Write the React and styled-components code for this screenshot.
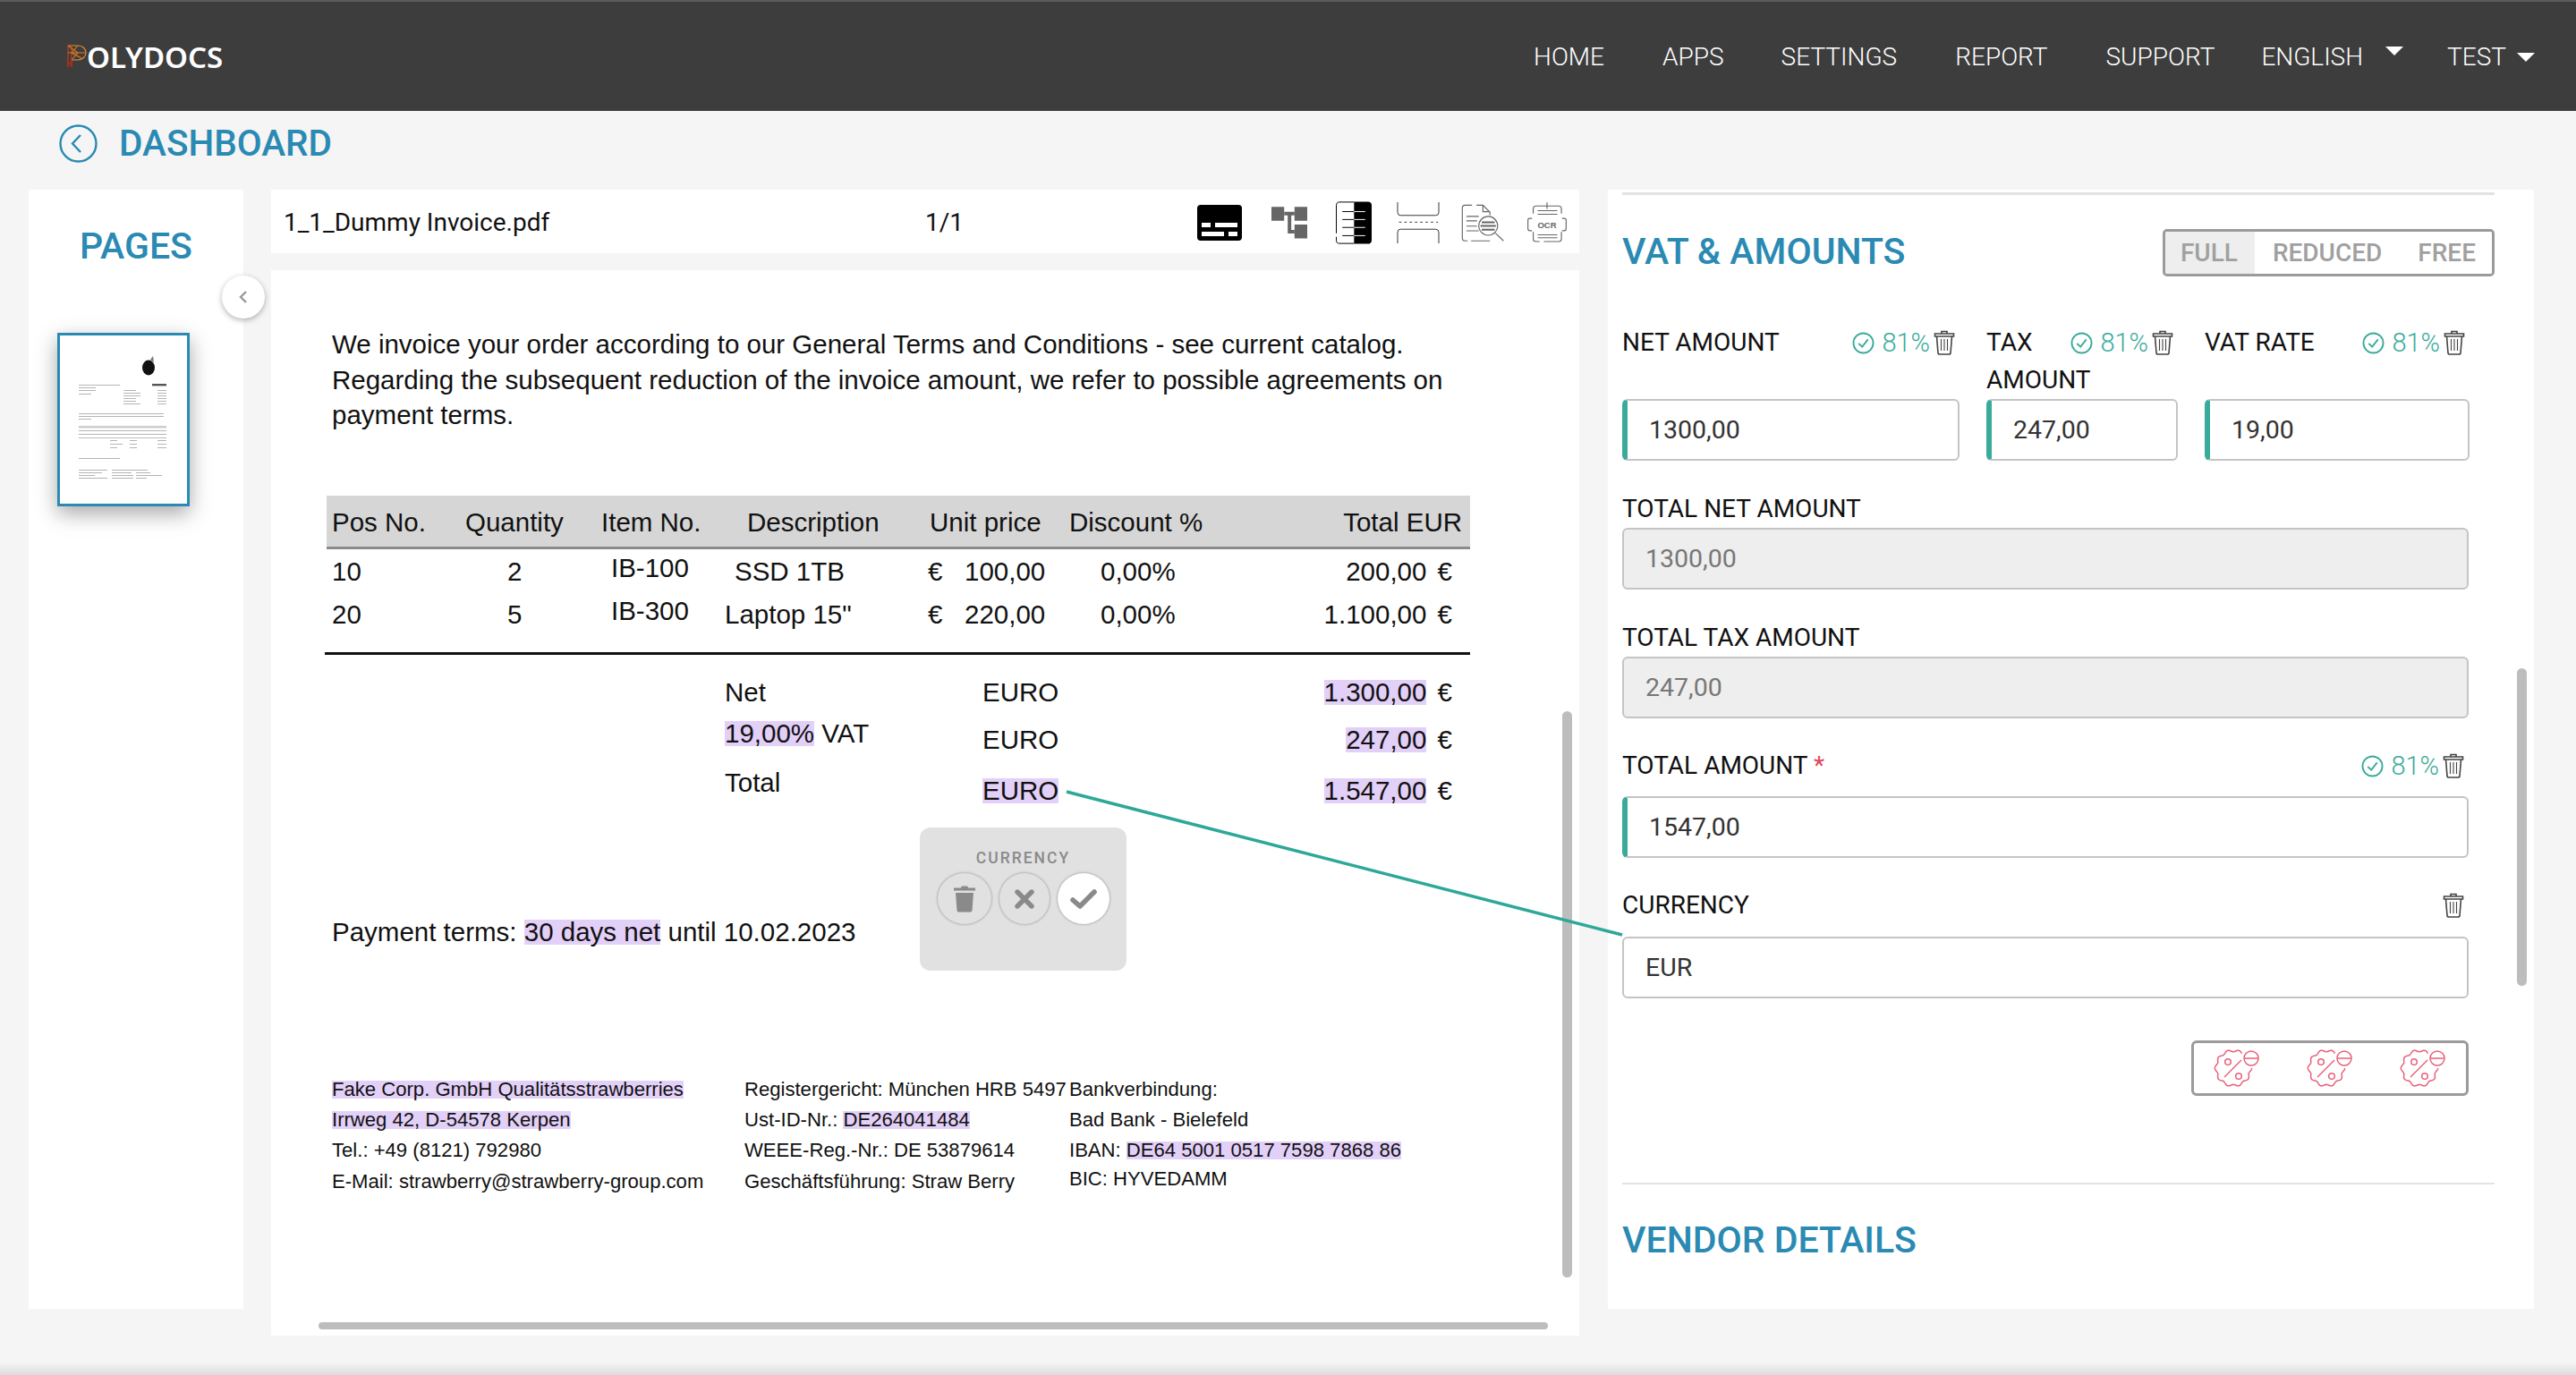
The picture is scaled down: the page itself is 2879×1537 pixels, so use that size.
import React from 'react';
import styled, { createGlobalStyle } from 'styled-components';

const BLUE = '#2a8ab3';
const TEAL = '#3aab9b';
const TABLE_COLUMNS = '149px 152px 138px 227px 158px 200px 1fr';

const GlobalStyle = createGlobalStyle`
  html, body { margin: 0; padding: 0; background: #f5f5f5; }
  body { font-family: Roboto, "Liberation Sans", sans-serif; }
  * { box-sizing: border-box; }
`;

const Page = styled.div`
  position: relative;
  width: 2879px;
  height: 1537px;
  overflow: hidden;
  display: flex;
  flex-direction: column;
  background: #f5f5f5;
`;

const Header = styled.header`
  height: 124px;
  flex: none;
  display: flex;
  align-items: center;
  justify-content: space-between;
  padding: 0 46px 0 74px;
  background: #3d3d3d;
  border-top: 2px solid #5b5b61;
  color: #fff;
`;

const Logo = styled.div`
  display: flex;
  align-items: center;
  font-family: "Noto Sans", sans-serif;
  font-size: 33px;
  font-weight: 600;
`;

const Nav = styled.nav`
  display: flex;
  align-items: center;
  font-size: 28px;
  font-weight: 300;
`;

const NavLink = styled.span`
  margin-left: ${({ $gap }) => $gap}px;
`;

const Caret = styled.span`
  width: 0;
  height: 0;
  margin-left: ${({ $gap }) => $gap}px;
  margin-top: ${({ $top }) => $top}px;
  border-left: 10px solid transparent;
  border-right: 10px solid transparent;
  border-top: 10px solid #fff;
`;

const TitleBar = styled.div`
  height: 88px;
  flex: none;
  display: flex;
  align-items: flex-start;
  padding: 15px 0 0 66px;
  gap: 24px;
`;

const Title = styled.h1`
  margin: 0;
  font-size: 40.5px;
  line-height: 43px;
  font-weight: 500;
  color: ${BLUE};
`;

const Content = styled.div`
  display: flex;
  align-items: flex-start;
  padding-left: 32px;
`;

const PagesPanel = styled.aside`
  position: relative;
  width: 240px;
  height: 1251px;
  flex: none;
  background: #fff;
  padding-top: 40px;
`;

const SectionTitle = styled.h2`
  margin: 0;
  font-size: 41px;
  line-height: 46px;
  font-weight: 500;
  color: ${BLUE};
`;

const PagesTitle = styled(SectionTitle)`
  padding-left: 57px;
`;

const VatTitle = styled(SectionTitle)`
  margin-top: -3px;
`;

const CollapseButton = styled.div`
  position: absolute;
  top: 96px;
  right: -24px;
  width: 48px;
  height: 48px;
  display: flex;
  align-items: center;
  justify-content: center;
  border-radius: 50%;
  background: #fff;
  box-shadow: 0 2px 6px rgba(0, 0, 0, 0.3);
  z-index: 2;
`;

const Thumb = styled.div`
  width: 148px;
  height: 194px;
  margin: 74px 0 0 32px;
  background: #fff;
  border: 3px solid ${BLUE};
  box-shadow: 0 8px 22px rgba(0, 0, 0, 0.35);
`;

const ViewerColumn = styled.main`
  width: 1462px;
  flex: none;
  margin-left: 31px;
  display: flex;
  flex-direction: column;
  gap: 19px;
`;

const Toolbar = styled.div`
  height: 71px;
  display: grid;
  grid-template-columns: 717px 1fr auto;
  align-items: center;
  padding: 2px 14px 0;
  background: #fff;
  font-size: 28px;
  color: #111;
`;

const ToolIcons = styled.div`
  display: flex;
  align-items: center;
`;

const ToolIcon = styled.svg`
  display: block;
  flex: none;
  margin-left: ${({ $gap }) => $gap}px;
`;

const DocPanel = styled.section`
  position: relative;
  height: 1191px;
  padding-top: 63px;
  background: #fff;
  font-family: "Liberation Sans", Arial, sans-serif;
  font-size: 29.5px;
  color: #111;
`;

const Paragraph = styled.p`
  margin: 0 0 0 68px;
  line-height: 39.5px;
  white-space: nowrap;
`;

const Mark = styled.span`
  display: inline-block;
  line-height: 28px;
  background: #e3d0f8;
`;

const TableHead = styled.div`
  display: grid;
  grid-template-columns: ${TABLE_COLUMNS};
  align-items: center;
  width: 1278px;
  height: 60px;
  margin: 70px 0 0 62px;
  padding: 3px 9px 0 6px;
  background: #d6d6d6;
  border-bottom: 3px solid #8b8b8b;
`;

const TableRows = styled.div`
  padding-top: 5px;
`;

const TableRow = styled.div`
  display: grid;
  grid-template-columns: ${TABLE_COLUMNS};
  width: 1278px;
  height: 48px;
  margin-left: 62px;
  padding: 0 20px 0 6px;
  line-height: 40px;
`;

const Cell = styled.div`
  white-space: nowrap;
  padding-left: ${({ $indent }) => $indent || 0}px;
  margin-top: ${({ $shift }) => $shift || 0}px;
`;

const HeadTotal = styled(Cell)`
  text-align: right;
`;

const AmountCell = styled(Cell)`
  text-align: right;
  word-spacing: 4px;
`;

const Rule = styled.div`
  width: 1280px;
  height: 3px;
  margin: 14px 0 0 60px;
  background: #111;
`;

const Totals = styled.div`
  width: 1252px;
  margin: 22px 0 0 68px;
  padding-left: 439px;
  line-height: 40px;
`;

const TotalRow = styled.div`
  display: grid;
  grid-template-columns: 288px 1fr;
  height: ${({ $height }) => $height}px;
`;

const TotalLabel = styled.div`
  grid-column: 1 / -1;
  height: 0;
  margin-top: ${({ $shift }) => $shift || 0}px;
  margin-bottom: ${({ $shift }) => -($shift || 0)}px;
  white-space: nowrap;
`;

const Terms = styled.p`
  margin: 118px 0 0 68px;
  line-height: 40px;
`;

const DocFooter = styled.div`
  display: grid;
  grid-template-columns: 461px 363px auto;
  margin: 139px 0 0 68px;
  font-size: 22.1px;
  line-height: 34.4px;
  white-space: nowrap;
`;

const FootMark = styled.span`
  display: inline-block;
  line-height: 20px;
  background: #e3d0f8;
`;

const FootRaised = styled.div`
  margin-top: -3px;
`;

const Popup = styled.div`
  position: absolute;
  left: 725px;
  top: 623px;
  width: 231px;
  height: 160px;
  padding-top: 24px;
  border-radius: 12px;
  background: #e1e1e1;
  font-family: Roboto, sans-serif;
`;

const PopupTitle = styled.div`
  text-align: center;
  font-size: 17.5px;
  line-height: 20px;
  font-weight: 500;
  letter-spacing: 2px;
  color: #8a8a8a;
`;

const PopupActions = styled.div`
  display: flex;
  align-items: center;
  gap: 9px;
  margin-top: 7px;
  padding-left: 20px;
`;

const RoundButton = styled.div`
  width: ${({ $size }) => $size}px;
  height: 57px;
  display: flex;
  align-items: center;
  justify-content: center;
  border-radius: 50%;
  background: ${({ $on }) => ($on ? '#fff' : '#e1e1e1')};
  box-shadow: 0 0 3px rgba(0, 0, 0, 0.4);
`;

const ScrollThumb = styled.div`
  position: absolute;
  left: ${({ $left }) => $left}px;
  top: ${({ $top }) => $top}px;
  width: ${({ $w }) => $w}px;
  height: ${({ $h }) => $h}px;
  border-radius: 6px;
  background: #bdbdbd;
`;

const FormPanel = styled.section`
  position: relative;
  width: 1035px;
  height: 1251px;
  flex: none;
  margin-left: 32px;
  padding: 3px 44px 0 16px;
  background: #fff;
  overflow: hidden;
`;

const TopLine = styled.div`
  height: 3px;
  background: #e3e3e3;
`;

const SectionHead = styled.div`
  display: flex;
  align-items: center;
  justify-content: space-between;
  margin-top: 38px;
  height: 53px;
`;

const Toggle = styled.div`
  display: flex;
  height: 53px;
  border: 3px solid #9c9a9a;
  border-radius: 5px;
  overflow: hidden;
`;

const ToggleItem = styled.div`
  display: flex;
  align-items: center;
  padding: 0 ${({ $right }) => $right}px 0 ${({ $left }) => $left}px;
  font-size: 28px;
  font-weight: 500;
  color: #a0a0a0;
  background: ${({ $on }) => ($on ? '#eeeeee' : '#fff')};
`;

const TripleRow = styled.div`
  display: grid;
  grid-template-columns: 377px 214px 296px;
  column-gap: 30px;
  width: 946px;
  margin-top: 53px;
`;

const Field = styled.div`
  display: flex;
  flex-direction: column;
  justify-content: space-between;
  width: 946px;
  margin-top: ${({ $top }) => $top || 0}px;
`;

const ColField = styled(Field)`
  width: auto;
  min-width: 0;
`;

const LabelRow = styled.div`
  display: flex;
  align-items: flex-start;
  justify-content: space-between;
  padding-right: 5px;
  margin-bottom: ${({ $gap }) => $gap || 0}px;
`;

const Label = styled.label`
  flex: 1;
  min-width: 0;
  font-size: 28px;
  line-height: 42px;
  color: #111;
`;

const Required = styled.span`
  color: #e2455a;
`;

const Confidence = styled.div`
  display: flex;
  align-items: center;
  flex: none;
  height: 42px;
  font-size: 29px;
  font-weight: 300;
  color: ${TEAL};
`;

const Percent = styled.span`
  margin: 0 4px 0 8px;
`;

const Input = styled.div`
  height: 69px;
  display: flex;
  align-items: center;
  padding-left: 24px;
  border: 2px solid #c4c4c4;
  border-left: ${({ $accent }) => ($accent ? `6px solid ${TEAL}` : '2px solid #c4c4c4')};
  border-radius: 6px;
  font-size: 28.5px;
  color: ${({ $off }) => ($off ? '#777' : '#333')};
  background: ${({ $off }) => ($off ? '#eeeeee' : '#fff')};
`;

const BadgeGroup = styled.div`
  display: flex;
  align-items: center;
  justify-content: center;
  gap: 44px;
  width: 310px;
  height: 62px;
  margin: 47px 0 0 636px;
  border: 3px solid #9c9a9a;
  border-radius: 6px;
`;

const Divider = styled.div`
  height: 2px;
  margin-top: 97px;
  background: #e3e3e3;
`;

const VendorTitle = styled(SectionTitle)`
  margin-top: 39px;
`;

const BottomShade = styled.div`
  position: absolute;
  left: 0;
  right: 0;
  bottom: 0;
  height: 14px;
  background: linear-gradient(#f5f5f5, #dcdcdc);
`;

const Connector = styled.svg`
  position: absolute;
  left: 0;
  top: 0;
  pointer-events: none;
  z-index: 3;
`;

const LogoMark = () => (
  <svg width="23" height="26" viewBox="0 0 23 26" fill="none" strokeWidth="1.1">
    <path d="M2 1H13C19 1 22 5 22 9C22 13 18 17 13 17H6" stroke="#e8902a" />
    <path d="M2 1V25M6 1V25" stroke="#c8401e" />
    <path d="M2 1L13 9L6 17M13 1L6 9L17 15M13 9H22M2 9H13" stroke="#e07a24" />
    <path d="M2 17L6 25M6 17L2 25" stroke="#b3201a" />
  </svg>
);

const BackIcon = () => (
  <svg width="43" height="43" viewBox="0 0 43 43" fill="none" stroke={BLUE} strokeWidth="2.4">
    <circle cx="21.5" cy="21.5" r="20" />
    <path d="M24 12L15 21.5L24 31" />
  </svg>
);

const ChevronIcon = () => (
  <svg width="12" height="16" viewBox="0 0 12 16" fill="none" stroke="#999" strokeWidth="2.4">
    <path d="M9 2L3 8L9 14" />
  </svg>
);

const thumbLines = [
  [21, 55, 46], [21, 58, 19], [21, 61, 19], [21, 65, 14],
  [71, 61, 14], [71, 64, 19], [71, 67, 19], [71, 70, 14], [71, 73, 14], [71, 76, 19],
  [109, 61, 10], [109, 64, 10], [109, 67, 10], [109, 70, 10], [109, 73, 10], [109, 76, 10],
  [21, 87, 95], [21, 90, 95], [21, 93, 14],
  [21, 106, 98], [21, 110, 98],
  [56, 117, 8], [56, 121, 14], [56, 125, 8], [78, 117, 8], [78, 121, 8], [78, 125, 8], [109, 117, 10], [109, 121, 10], [109, 125, 10],
  [21, 137, 46],
  [21, 150, 32], [21, 153, 26], [21, 156, 18], [21, 159, 32],
  [58, 150, 40], [58, 153, 22], [58, 156, 24], [58, 159, 24],
  [85, 153, 16], [85, 156, 29], [85, 159, 12],
];

const Thumbnail = () => (
  <svg width="142" height="188" viewBox="0 0 142 188">
    <ellipse cx="99" cy="36" rx="7" ry="8.5" fill="#111" />
    <path d="M101 27l3-4 1 7z" fill="#777" />
    <rect x="103" y="54" width="16" height="2.4" fill="#555" />
    <rect x="21" y="101" width="98" height="2.6" fill="#cfcfcf" />
    <rect x="21" y="114" width="98" height="1" fill="#bbb" />
    {thumbLines.map(([x, y, w], i) => (
      <rect key={i} x={x} y={y} width={w} height="1" fill="#b4b4b4" />
    ))}
  </svg>
);

const CheckCircle = () => (
  <svg width="25" height="25" viewBox="0 0 24 24" fill="none" stroke={TEAL} strokeWidth="1.8">
    <circle cx="12" cy="12" r="10.6" />
    <path d="M7 12.5L10.8 16L17 8" />
  </svg>
);

const OutlineTrash = () => (
  <svg width="24" height="28" viewBox="0 0 24 28" fill="none" stroke="#444" strokeWidth="1.6">
    <path d="M9 3.5V1.5H15V3.5M1.5 7V4H22.5V7H1.5Z" />
    <path d="M3.5 7L5 25.5C5 26.5 6 27 7 27H17C18 27 19 26.5 19 25.5L20.5 7" />
    <path d="M8.5 10V23M12 10V23M15.5 10V23" strokeWidth="1.1" />
  </svg>
);

const Conf = ({ score = true }) => (
  <Confidence>
    {score && <CheckCircle />}
    {score && <Percent>81%</Percent>}
    <OutlineTrash />
  </Confidence>
);

const SolidTrash = () => (
  <svg width="26" height="30" viewBox="0 0 26 30" fill="#8a8a8a">
    <path d="M9 2.5C9 1 10 .5 11 .5H15C16 .5 17 1 17 2.5H25V5.5H1V2.5Z" />
    <path d="M3 8H23L21.5 27.5C21.4 29 20.5 29.5 19 29.5H7C5.5 29.5 4.6 29 4.5 27.5Z" />
  </svg>
);

const CrossIcon = () => (
  <svg width="22" height="22" viewBox="0 0 22 22" fill="none" stroke="#8a8a8a" strokeWidth="5.4" strokeLinecap="round">
    <path d="M3 3L19 19M19 3L3 19" />
  </svg>
);

const TickIcon = () => (
  <svg width="30" height="24" viewBox="0 0 30 24" fill="none" stroke="#8a8a8a" strokeWidth="5.6" strokeLinecap="round" strokeLinejoin="round">
    <path d="M3 13L11 20L27 4" />
  </svg>
);

// wavy badge outline with an opening at the upper right for the minus disc
const badgePath = () => {
  const points = [];
  for (let a = 0; a <= 300; a += 3) {
    const t = (a * Math.PI) / 180;
    const r = 19.5 + 1.2 * Math.cos(10 * t);
    points.push(`${(26 + r * Math.cos(t)).toFixed(1)} ${(25 + r * Math.sin(t)).toFixed(1)}`);
  }
  return `M${points.join('L')}`;
};

const DiscountBadge = () => (
  <svg width="60" height="50" viewBox="0 0 60 50" fill="none" stroke="#e8607a" strokeWidth="1.5">
    <path d={badgePath()} />
    <path d="M16 35L35 16" />
    <circle cx="20" cy="18" r="3.3" />
    <circle cx="32" cy="34" r="3.3" />
    <circle cx="46" cy="14" r="8" />
    <path d="M38.5 14H53.5" />
  </svg>
);

const IconKeyboard = () => (
  <ToolIcon $gap={0} width="50" height="40" viewBox="115 90 150 120">
    <rect x="115" y="90" width="150" height="120" rx="12" fill="#000" />
    <path d="M130 150h30v15h-30zM175 150h75v15h-75zM130 180h75v15h-75zM220 180h30v15h-30z" fill="#fff" />
  </ToolIcon>
);

const IconTree = () => (
  <ToolIcon $gap={33} width="40" height="36" viewBox="363 90 121 108">
    <path d="M363 90h43v47h-43zM441 90h43v47h-43zM441 150h43v47h-43z" fill="#666" />
    <path d="M406 107h35v12h-35zM418 107h12v73h-12zM418 168h23v12h-23z" fill="#666" />
  </ToolIcon>
);

const IconColumns = () => (
  <ToolIcon $gap={32} width="40" height="48" viewBox="578 72 122 144">
    <path d="M640 72H688C695 72 700 77 700 84V204C700 211 695 216 688 216H640Z" fill="#000" />
    <path d="M640 73.5H590C583 73.5 579.5 78 579.5 85V180M579.5 192V204C579.5 211 583 214.5 590 214.5H640" fill="none" stroke="#000" strokeWidth="3" />
    <path d="M600 106H640M600 133H640M600 160H640M600 188H640" stroke="#000" strokeWidth="3" />
    <path d="M640 106H678M640 133H678M640 160H678M640 188H678" stroke="#fff" strokeWidth="3" />
  </ToolIcon>
);

const IconSplit = () => (
  <ToolIcon $gap={28} width="48" height="46" viewBox="783 75 144 140" fill="none" stroke="#333" strokeWidth="3">
    <path d="M785 75V110Q785 120 795 120H915Q925 120 925 110V75" />
    <path d="M790 143H922" strokeDasharray="8 10" />
    <path d="M785 215V178Q785 167 795 167H915Q925 167 925 178V215" />
  </ToolIcon>
);

const IconSearchDoc = () => (
  <ToolIcon $gap={24} width="48" height="42" viewBox="998 80 146 127" fill="none" stroke="#666" strokeWidth="3.5">
    <path d="M1050 84H1072L1096 108V118M1072 84V106H1096M1035 84H1012Q1002 84 1002 94V195Q1002 205 1012 205H1020M1032 205H1096" />
    <path d="M1016 122H1058M1016 137H1052M1016 155H1052M1016 171H1058" />
    <circle cx="1090" cy="154" r="32" />
    <path d="M1068 142H1112M1064 154H1116M1068 167H1112" strokeWidth="6" />
    <path d="M1114 178L1142 205" />
  </ToolIcon>
);

const IconOcr = () => (
  <ToolIcon $gap={26} width="44" height="45" viewBox="1220 72 134 135" fill="none" stroke="#666" strokeWidth="3.5">
    <path d="M1287 72V94M1240 110V94Q1240 84 1250 84H1326Q1336 84 1336 94V110M1240 172V195Q1240 205 1250 205H1262M1276 205H1326Q1336 205 1336 195V172" />
    <path d="M1255 100H1322M1255 112H1322M1255 182H1322M1255 192H1322" />
    <path d="M1236 126H1228Q1222 126 1222 132V160Q1222 168 1228 168H1236M1338 126H1346Q1352 126 1352 132V160Q1352 168 1346 168H1338" />
    <text x="1287" y="158" textAnchor="middle" fontFamily="Liberation Sans, sans-serif" fontSize="29" fontWeight="700" fill="#666" stroke="none">OCR</text>
  </ToolIcon>
);

const App = () => {
  return (
    <Page>
      <GlobalStyle />
      <Header>
        <Logo>
          <LogoMark />
          OLYDOCS
        </Logo>
        <Nav>
          <NavLink $gap={0}>HOME</NavLink>
          <NavLink $gap={65}>APPS</NavLink>
          <NavLink $gap={64}>SETTINGS</NavLink>
          <NavLink $gap={65}>REPORT</NavLink>
          <NavLink $gap={65}>SUPPORT</NavLink>
          <NavLink $gap={52}>ENGLISH</NavLink>
          <Caret $gap={25} $top={-12} />
          <NavLink $gap={49}>TEST</NavLink>
          <Caret $gap={12} $top={2} />
        </Nav>
      </Header>

      <TitleBar>
        <BackIcon />
        <Title>DASHBOARD</Title>
      </TitleBar>

      <Content>
        <PagesPanel>
          <PagesTitle>PAGES</PagesTitle>
          <CollapseButton>
            <ChevronIcon />
          </CollapseButton>
          <Thumb>
            <Thumbnail />
          </Thumb>
        </PagesPanel>

        <ViewerColumn>
          <Toolbar>
            <span>1_1_Dummy Invoice.pdf</span>
            <span>1/1</span>
            <ToolIcons>
              <IconKeyboard />
              <IconTree />
              <IconColumns />
              <IconSplit />
              <IconSearchDoc />
              <IconOcr />
            </ToolIcons>
          </Toolbar>

          <DocPanel>
            <Paragraph>
              We invoice your order according to our General Terms and Conditions - see current catalog.
              <br />
              Regarding the subsequent reduction of the invoice amount, we refer to possible agreements on
              <br />
              payment terms.
            </Paragraph>

            <TableHead>
              <Cell>Pos No.</Cell>
              <Cell>Quantity</Cell>
              <Cell>Item No.</Cell>
              <Cell $indent={25}>Description</Cell>
              <Cell $indent={2}>Unit price</Cell>
              <Cell>Discount %</Cell>
              <HeadTotal>Total EUR</HeadTotal>
            </TableHead>
            <TableRows>
              <TableRow>
                <Cell>10</Cell>
                <Cell $indent={47}>2</Cell>
                <Cell $indent={11} $shift={-4}>IB-100</Cell>
                <Cell $indent={11}>SSD 1TB</Cell>
                <Cell>€&nbsp;&nbsp;&nbsp;100,00</Cell>
                <Cell $indent={35}>0,00%</Cell>
                <AmountCell>200,00 €</AmountCell>
              </TableRow>
              <TableRow>
                <Cell>20</Cell>
                <Cell $indent={47}>5</Cell>
                <Cell $indent={11} $shift={-4}>IB-300</Cell>
                <Cell>Laptop 15"</Cell>
                <Cell>€&nbsp;&nbsp;&nbsp;220,00</Cell>
                <Cell $indent={35}>0,00%</Cell>
                <AmountCell>1.100,00 €</AmountCell>
              </TableRow>
            </TableRows>
            <Rule />

            <Totals>
              <TotalRow $height={53}>
                <Cell>Net</Cell>
                <AmountRow>
                  <span>EURO</span>
                  <AmountCell><Mark>1.300,00</Mark> €</AmountCell>
                </AmountRow>
              </TotalRow>
              <TotalRow $height={57}>
                <Cell $shift={-7}><Mark>19,00%</Mark> VAT</Cell>
                <AmountRow>
                  <span>EURO</span>
                  <AmountCell><Mark>247,00</Mark> €</AmountCell>
                </AmountRow>
              </TotalRow>
              <TotalRow $height={40}>
                <Cell $shift={-9}>Total</Cell>
                <AmountRow>
                  <span><Mark>EURO</Mark></span>
                  <AmountCell><Mark>1.547,00</Mark> €</AmountCell>
                </AmountRow>
              </TotalRow>
            </Totals>

            <Terms>
              Payment terms: <Mark>30 days net</Mark> until 10.02.2023
            </Terms>

            <DocFooter>
              <div>
                <FootMark>Fake Corp. GmbH Qualitätsstrawberries</FootMark>
                <br />
                <FootMark>Irrweg 42, D-54578 Kerpen</FootMark>
                <br />
                Tel.: +49 (8121) 792980
                <br />
                E-Mail: strawberry@strawberry-group.com
              </div>
              <div>
                Registergericht: München HRB 5497
                <br />
                Ust-ID-Nr.: <FootMark>DE264041484</FootMark>
                <br />
                WEEE-Reg.-Nr.: DE 53879614
                <br />
                Geschäftsführung: Straw Berry
              </div>
              <div>
                Bankverbindung:
                <br />
                Bad Bank - Bielefeld
                <br />
                IBAN: <FootMark>DE64 5001 0517 7598 7868 86</FootMark>
                <FootRaised>BIC: HYVEDAMM</FootRaised>
              </div>
            </DocFooter>

            <Popup>
              <PopupTitle>CURRENCY</PopupTitle>
              <PopupActions>
                <RoundButton $size={60}>
                  <SolidTrash />
                </RoundButton>
                <RoundButton $size={56}>
                  <CrossIcon />
                </RoundButton>
                <RoundButton $size={58} $on>
                  <TickIcon />
                </RoundButton>
              </PopupActions>
            </Popup>

            <ScrollThumb $left={1443} $top={493} $w={11} $h={633} />
            <ScrollThumb $left={53} $top={1176} $w={1374} $h={8} />
          </DocPanel>
        </ViewerColumn>

        <FormPanel>
          <TopLine />
          <SectionHead>
            <VatTitle>VAT &amp; AMOUNTS</VatTitle>
            <Toggle>
              <ToggleItem $left={17} $right={19} $on>FULL</ToggleItem>
              <ToggleItem $left={20} $right={20}>REDUCED</ToggleItem>
              <ToggleItem $left={20} $right={18}>FREE</ToggleItem>
            </Toggle>
          </SectionHead>

          <TripleRow>
            <ColField>
              <LabelRow>
                <Label>NET AMOUNT</Label>
                <Conf />
              </LabelRow>
              <Input $accent>1300,00</Input>
            </ColField>
            <ColField>
              <LabelRow>
                <Label>TAX AMOUNT</Label>
                <Conf />
              </LabelRow>
              <Input $accent>247,00</Input>
            </ColField>
            <ColField>
              <LabelRow>
                <Label>VAT RATE</Label>
                <Conf />
              </LabelRow>
              <Input $accent>19,00</Input>
            </ColField>
          </TripleRow>

          <Field $top={33}>
            <LabelRow>
              <Label>TOTAL NET AMOUNT</Label>
            </LabelRow>
            <Input $off>1300,00</Input>
          </Field>
          <Field $top={33}>
            <LabelRow>
              <Label>TOTAL TAX AMOUNT</Label>
            </LabelRow>
            <Input $off>247,00</Input>
          </Field>
          <Field $top={32}>
            <LabelRow $gap={13}>
              <Label>TOTAL AMOUNT <Required>*</Required></Label>
              <Conf />
            </LabelRow>
            <Input $accent>1547,00</Input>
          </Field>
          <Field $top={32}>
            <LabelRow $gap={14}>
              <Label>CURRENCY</Label>
              <Conf score={false} />
            </LabelRow>
            <Input>EUR</Input>
          </Field>

          <BadgeGroup>
            <DiscountBadge />
            <DiscountBadge />
            <DiscountBadge />
          </BadgeGroup>

          <Divider />
          <VendorTitle>VENDOR DETAILS</VendorTitle>

          <ScrollThumb $left={1016} $top={535} $w={11} $h={355} />
        </FormPanel>
      </Content>

      <Connector width="2879" height="1537">
        <line x1="1192" y1="885" x2="1813" y2="1045" stroke="#2da898" strokeWidth="3.5" />
      </Connector>
      <BottomShade />
    </Page>
  );
};

const AmountRow = styled.div`
  display: grid;
  grid-template-columns: 1fr auto;
`;

export default App;
